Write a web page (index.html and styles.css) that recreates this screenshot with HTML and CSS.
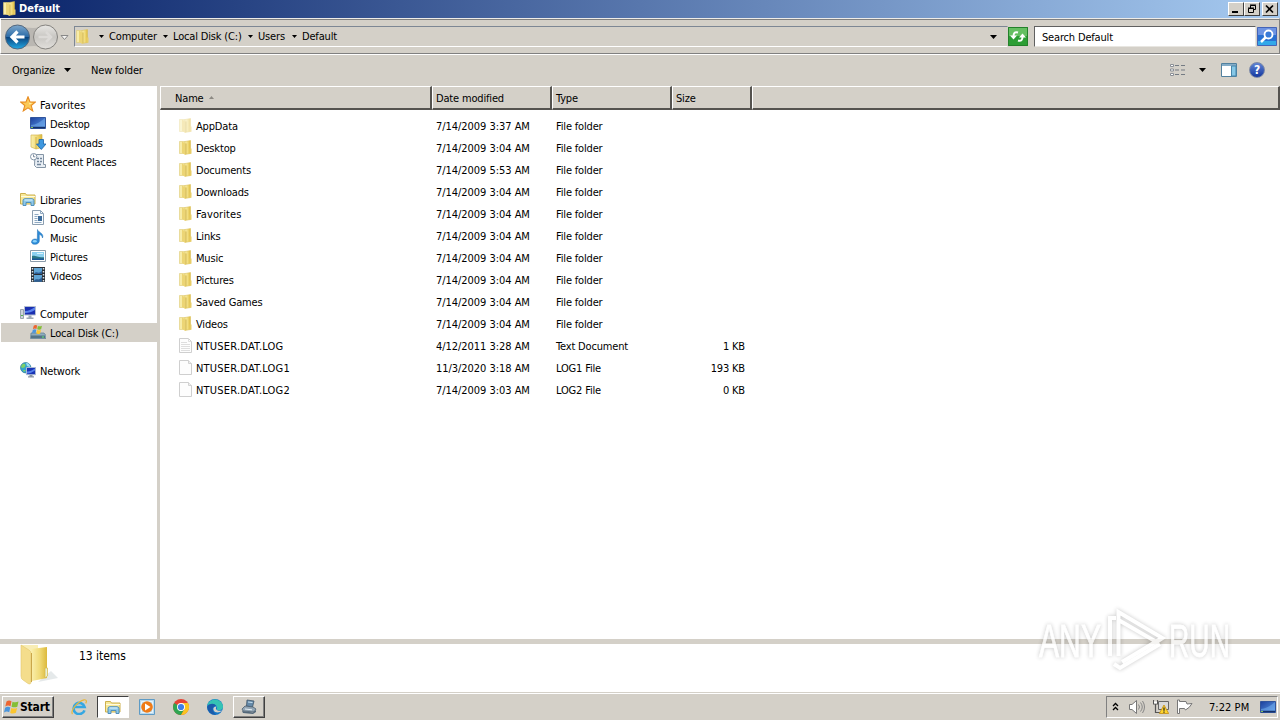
FILE: index.html
```html
<!DOCTYPE html>
<html lang="en">
<head>
    <meta charset="utf-8">
    <title>Default</title>
    <link rel="stylesheet" href="styles.css">
</head>
<body>

    <!-- shared icons -->
    <svg class="sprite">
        <defs>
            <linearGradient id="gold" x1="0" x2="1"><stop offset="0" stop-color="#fbf0ae"/><stop offset=".55" stop-color="#f0da77"/><stop offset="1" stop-color="#dcb93c"/></linearGradient>
            <linearGradient id="blue" x1="0" y1="0" x2="1" y2="1"><stop offset="0" stop-color="#1c3f9c"/><stop offset="1" stop-color="#5b9be8"/></linearGradient>
            <linearGradient id="navBlue" x1="0" y1="0" x2="0" y2="1"><stop offset="0" stop-color="#7fa8cc"/><stop offset=".48" stop-color="#2c6ca8"/><stop offset=".52" stop-color="#0b4580"/><stop offset="1" stop-color="#23a9e4"/></linearGradient>
            <linearGradient id="navGray" x1="0" y1="0" x2="0" y2="1"><stop offset="0" stop-color="#e8e7e4"/><stop offset=".5" stop-color="#c8c6c2"/><stop offset="1" stop-color="#e2e0dc"/></linearGradient>
        </defs>
        <symbol id="folder" viewBox="0 0 16 16">
            <path d="M1.500 1.500h5.500v12H1.500z" fill="#f7eca9" stroke="#dfcb75" stroke-width=".6"/>
            <path d="M7 1.500l5.500-1v13L7 14.500z" fill="url(#gold)" stroke="#d8bc52" stroke-width=".5"/>
            <path d="M4 1.500l3.500 2v11.500L4 13z" fill="#ecd575"/>
            <path d="M8 3.500v10.500" stroke="#c3a33a" stroke-width=".7"/>
            <path d="M11.500 8.500h2v5.200h-2z" fill="#e8cd66"/>
        </symbol>
        <symbol id="page" viewBox="0 0 16 16">
            <path d="M1.500.5h9l3 3v11h-12z" fill="#fdfdfd" stroke="#cfcfcf"/>
            <path d="M10.500.5v3h3" fill="#eee" stroke="#d2d2d2"/>
        </symbol>
        <symbol id="text" viewBox="0 0 16 16">
            <path d="M1.500.5h9l3 3v11h-12z" fill="#fdfdfd" stroke="#cfcfcf"/>
            <path d="M10.500.5v3h3M3 4.500h6M3 6.500h9M3 8.500h9M3 10.500h9M3 12.500h9" fill="none" stroke="#dedede"/>
        </symbol>
        <symbol id="star" viewBox="0 0 16 16">
            <path d="M8 .8l2 5.100 5.400.200-4.200 3.400 1.500 5.400L8 11.800l-4.700 3.100 1.500-5.400L.6 6.100 6 5.900z" fill="#fbc957" stroke="#e88c22" stroke-width="1.100"/>
            <path d="M8 3l1.200 3.700 3.300.3-3 1.500z" fill="#fff0a8"/>
        </symbol>
        <symbol id="desktop" viewBox="0 0 16 16">
            <path d="M.5 2.500h15v11H.5z" fill="url(#blue)" stroke="#31549c"/>
            <path d="M1 10C6 10 10 7 15 3v9H1z" fill="#78b3f2" opacity=".5"/>
            <path d="M1 12.500h14" stroke="#143068" stroke-width="1.500"/><path d="M1 12.500h2" stroke="#82c35c"/>
        </symbol>
        <symbol id="downloads" viewBox="0 0 16 16">
            <path d="M1 1h7l4-.5v13L6 15l-5-2z" fill="url(#gold)" stroke="#d4b650" stroke-width=".7"/><path d="M6 3v12" stroke="#c9a637" stroke-width=".8"/>
            <path d="M9 5.500h4.500V10H16l-4.700 5.500L6.500 10H9z" fill="#3e98e0" stroke="#1963a8" stroke-width=".8"/>
        </symbol>
        <symbol id="recent" viewBox="0 0 16 16">
            <path d="M5 1.500h8.500v10h2v3h-9l-2-2z" fill="#e8eef4" stroke="#8494a5"/>
            <path d="M7 5.500h2M10 5.500h2M7 8.500h2M10 8.500h2M7 11.500h4" stroke="#71859a" stroke-width="1.300"/>
            <circle cx="3.700" cy="3.700" r="3.200" fill="#fff" stroke="#8496a9"/><path d="M3.500 1.500v2.300h1.800" fill="none" stroke="#5d7087" stroke-width=".8"/>
        </symbol>
        <symbol id="libraries" viewBox="0 0 16 16">
            <path d="M.5 13V2.500h5l1 1.500H15v9z" fill="#f7e99a" stroke="#cdb04d"/>
            <path d="M1 5.500h14" stroke="#fffbe0"/>
            <path d="M3 14.500V9.500q0-1.800 2-1.800h7q2 0 2 1.800v5h-3v-3H6v3z" fill="#8fc8e8" stroke="#4689b8" stroke-width=".9"/>
            <path d="M4.500 9h8" stroke="#dff5ff"/>
        </symbol>
        <symbol id="documents" viewBox="0 0 16 16">
            <path d="M2.500.5h8l3 3v11h-11z" fill="#f9fcfe" stroke="#8c9fb1"/>
            <path d="M10.500.5v3h3M4.500 4.500h4M4.500 6.500h3M4.500 8.500h3M4.500 12.500h7M4.500 10.500h3" fill="none" stroke="#8fa9c2"/>
            <path d="M8 6h4v5H8z" fill="#3b6b9c"/>
        </symbol>
        <symbol id="music" viewBox="0 0 16 16">
            <path d="M7.500.5c1 3.500 6.800 3.500 5 8.500-.5-2.500-1.700-3-3.200-3.700V12c0 4-7.800 4.500-7.800 1 0-2.800 3.500-3.700 5.800-2.500z" fill="#2c8bd8" stroke="#1f6eb3" stroke-width=".5"/>
            <ellipse cx="4.800" cy="12.300" rx="2" ry="1.200" fill="#8bd2fa"/>
        </symbol>
        <symbol id="pictures" viewBox="0 0 16 16">
            <path d="M.5 2.500h15v11H.5z" fill="#fff" stroke="#8b9cab"/>
            <path d="M2 4h12v8H2z" fill="#8bd0f0"/><path d="M2 8c3-1 5 1.500 12 1.200V12H2z" fill="#2b7785"/><path d="M2 10.500h12V12H2z" fill="#1a5798"/><path d="M7 5.500h6" stroke="#d7f1fc"/>
        </symbol>
        <symbol id="videos" viewBox="0 0 16 16">
            <path d="M1 0h14v15H1z" fill="#292f36"/><path d="M4 1h8v6H4zM4 8h8v6.500H4z" fill="#5fa4d5"/>
            <path d="M4 7c3-4 4 1 8-3v3zM4 14c3-4 4 1 8-4v4.500H4z" fill="#2c5c92"/>
            <path d="M2.500 1v14M13.500 1v14" stroke="#dfe5ea" stroke-width="1.500" stroke-dasharray="1.500 1.500"/>
        </symbol>
        <symbol id="computer" viewBox="0 0 16 16">
            <path d="M.5 4.500h3v9h-3z" fill="#ced4db" stroke="#9aa4af"/><path d="M1 10.500h2" stroke="#59b551"/>
            <path d="M4.500 1.500h11v8.500h-11z" fill="#1a2fb0" stroke="#b4bed0"/>
            <path d="M5 6c4 0 7-2 10-4v3c-3 2-6 3-10 3z" fill="#5b83ee"/>
            <path d="M8.500 10.500h3v2h2v1.500h-7v-1.500h2z" fill="#9da8b5"/>
        </symbol>
        <symbol id="flag4" viewBox="0 0 16 16">
            <path d="M2.500 2.500Q5 .5 7.500 2.300L6.500 7.300Q4 5.700 1.300 7.500z" fill="#ed6530"/>
            <path d="M8.500 2.800Q11.500 4 14.500 2.500L13.300 7.700Q10.500 9 7.500 7.700z" fill="#84be35"/>
            <path d="M1.100 8.700Q3.800 6.900 6.300 8.500L5.200 13.300Q2.700 11.700 0 13.500z" fill="#4a95dc"/>
            <path d="M7.300 8.900Q10 10.200 13.100 8.900L11.900 13.800Q9 15.300 6.200 13.900z" fill="#fbc52e"/>
        </symbol>
        <symbol id="disk" viewBox="0 0 16 16">
            <path d="M1 9h13l2 2.500v3H.5z" fill="#8eacbd" stroke="#5c7c90" stroke-width=".7"/>
            <path d="M1 11.500h14v2.500H1z" fill="#537487"/><path d="M12 13h2" stroke="#65ea6e"/>
            <use href="#flag4" x="2" y="0" width="11" height="11"/>
        </symbol>
        <symbol id="network" viewBox="0 0 16 16">
            <circle cx="5.700" cy="5.700" r="5.200" fill="#35a4cd" stroke="#2c7893" stroke-width=".7"/>
            <path d="M2 2.500c3-2 4 0 3 2S2 6 1 5zM6 8l-2 2-1-2z" fill="#7fd066"/>
            <path d="M6 1c3 0 4 2 4 4L7 4z" fill="#a4dff2"/>
            <path d="M6.500 5.500h9v7.200h-9z" fill="#1934b5" stroke="#aab8d2"/><path d="M7 9.500c3 0 5-1 8-3v2c-3 2-5 3-8 3z" fill="#5680ec"/>
            <path d="M9.500 13h3v1.300h1.500v1.200H8v-1.200h1.500z" fill="#8b96a3"/>
        </symbol>
        <symbol id="down" viewBox="0 0 7 4"><path d="M0 0h7L3.500 4z" fill="#000"/></symbol>
    </svg>

    <div class="titlebar">
        <svg class="icon"><use href="#folder"/></svg>
        <h1>Default</h1>
        <div class="window-buttons">
            <button><svg viewBox="0 0 12 10"><path d="M2 8h6" stroke="#000" stroke-width="2"/></svg></button>
            <button><svg viewBox="0 0 12 10"><path d="M4.500 4V1.500h5v4H8M4 1h6M2.500 4.500h5v4h-5zM2 4h6" fill="none" stroke="#000"/></svg></button>
            <button class="close"><svg viewBox="0 0 12 10"><path d="M2 1.500l7 7M9 1.500l-7 7" stroke="#000" stroke-width="1.700"/></svg></button>
        </div>
    </div>

    <div class="navbar">
        <svg class="travel" viewBox="0 0 66 28">
            <path d="M14 3q15 4 31 0v22q-15-4-31 0z" fill="#bab7b2"/>
            <circle cx="13.500" cy="14" r="12" fill="url(#navBlue)" stroke="#53677d"/>
            <path d="M20.500 14H9M13.500 8.500L8 14l5.500 5.500" fill="none" stroke="#fff" stroke-width="3.200"/>
            <circle cx="41.500" cy="14" r="12" fill="url(#navGray)" stroke="#85837f"/>
            <path d="M34.500 14H47M42 9l5 5-5 5" fill="none" stroke="#dcdad7" stroke-width="2.500"/>
            <path d="M57 12.500h7L60.500 16.500z" fill="#f4f3f1" stroke="#888"/>
        </svg>
        <div class="address">
            <svg class="icon"><use href="#folder"/></svg>
            <div class="crumbs">
                <svg class="arrow"><use href="#down"/></svg><span class="c-computer">Computer</span>
                <svg class="arrow"><use href="#down"/></svg><span class="c-disk">Local Disk (C:)</span>
                <svg class="arrow"><use href="#down"/></svg><span class="c-users">Users</span>
                <svg class="arrow"><use href="#down"/></svg><span>Default</span>
            </div>
            <svg class="arrow wide"><use href="#down"/></svg>
        </div>
        <svg class="refresh" viewBox="0 0 20 19">
            <path d="M0 0h20v19H0z" fill="#2d9e35"/><path d="M1 1h18v8H1z" fill="#65bf62"/>
            <path d="M.5.5h19v18H.5z" fill="none" stroke="#24812b"/>
            <path d="M10 5.500Q5.500 4 5.500 9.500M10 13.500q4.500 1.500 4.500-4" fill="none" stroke="#fff" stroke-width="2"/>
            <path d="M2 8.500h7l-3.500 4zM11 10.500h7l-3.500-4z" fill="#fff"/>
        </svg>
        <div class="search">Search Default</div>
        <svg class="find" viewBox="0 0 20 19">
            <path d="M.5.5h19v18H.5z" fill="#2870d2" stroke="#4564b7"/><path d="M1 1h18v7H1z" fill="#6d93e2"/><path d="M1 14h18v4H1z" fill="#32a8e9"/>
            <circle cx="11.500" cy="7.500" r="4" fill="#397ad8" stroke="#fff" stroke-width="1.800"/><path d="M8.500 10.500L4 15" stroke="#fff" stroke-width="2.500"/>
        </svg>
    </div>

    <div class="toolbar">
        <span class="organize">Organize</span>
        <svg class="arrow big"><use href="#down"/></svg>
        <span class="new-folder">New folder</span>
        <svg class="views" viewBox="0 0 16 14">
            <path d="M.5 1.500h3v2h-3zM.5 6h3v2h-3zM.5 10.500h3v2h-3z" fill="#fff" stroke="#8a8f96"/>
            <path d="M5 2.500h4M11 2.500h4M5 7h4M11 7h4M5 11.500h4M11 11.500h4" stroke="#747b83"/>
        </svg>
        <svg class="arrow big views-arrow"><use href="#down"/></svg>
        <svg class="preview" viewBox="0 0 16 14">
            <path d="M.5.500h15v13H.5z" fill="#fff" stroke="#51809e"/><path d="M1 2h14" stroke="#5b91b4" stroke-width="1.500"/>
            <path d="M10.500 3h4.500v10h-4.500z" fill="#86c8e7" stroke="#4685aa"/>
        </svg>
        <div class="help">?</div>
    </div>

    <div class="main">
        <div class="sidebar">
            <ul>
                <li class="top"><svg class="icon"><use href="#star"/></svg><span class="favorites">Favorites</span></li>
                <li><svg class="icon"><use href="#desktop"/></svg>Desktop</li>
                <li><svg class="icon"><use href="#downloads"/></svg>Downloads</li>
                <li><svg class="icon"><use href="#recent"/></svg>Recent Places</li>
            </ul>
            <ul>
                <li class="top"><svg class="icon"><use href="#libraries"/></svg>Libraries</li>
                <li><svg class="icon"><use href="#documents"/></svg>Documents</li>
                <li><svg class="icon"><use href="#music"/></svg>Music</li>
                <li><svg class="icon"><use href="#pictures"/></svg>Pictures</li>
                <li><svg class="icon"><use href="#videos"/></svg>Videos</li>
            </ul>
            <ul>
                <li class="top"><svg class="icon"><use href="#computer"/></svg>Computer</li>
                <li class="selected"><svg class="icon"><use href="#disk"/></svg>Local Disk (C:)</li>
            </ul>
            <ul>
                <li class="top"><svg class="icon"><use href="#network"/></svg>Network</li>
            </ul>
        </div>

        <div class="files">
            <div class="columns">
                <div>Name <svg class="sort" viewBox="0 0 5 3"><path d="M0 3h5L2.500 0z" fill="#8c8983"/></svg></div>
                <div>Date modified</div>
                <div>Type</div>
                <div>Size</div>
                <div></div>
            </div>
            <div class="rows">
                <div class="row hidden-file"><svg class="icon"><use href="#folder"/></svg><span>AppData</span><span class="date">7/14/2009 3:37 AM</span><span>File folder</span></div>
                <div class="row"><svg class="icon"><use href="#folder"/></svg><span>Desktop</span><span class="date">7/14/2009 3:04 AM</span><span>File folder</span></div>
                <div class="row"><svg class="icon"><use href="#folder"/></svg><span>Documents</span><span class="date">7/14/2009 5:53 AM</span><span>File folder</span></div>
                <div class="row"><svg class="icon"><use href="#folder"/></svg><span>Downloads</span><span class="date">7/14/2009 3:04 AM</span><span>File folder</span></div>
                <div class="row"><svg class="icon"><use href="#folder"/></svg><span class="favorites">Favorites</span><span class="date">7/14/2009 3:04 AM</span><span>File folder</span></div>
                <div class="row"><svg class="icon"><use href="#folder"/></svg><span>Links</span><span class="date">7/14/2009 3:04 AM</span><span>File folder</span></div>
                <div class="row"><svg class="icon"><use href="#folder"/></svg><span>Music</span><span class="date">7/14/2009 3:04 AM</span><span>File folder</span></div>
                <div class="row"><svg class="icon"><use href="#folder"/></svg><span>Pictures</span><span class="date">7/14/2009 3:04 AM</span><span>File folder</span></div>
                <div class="row"><svg class="icon"><use href="#folder"/></svg><span>Saved Games</span><span class="date">7/14/2009 3:04 AM</span><span>File folder</span></div>
                <div class="row"><svg class="icon"><use href="#folder"/></svg><span>Videos</span><span class="date">7/14/2009 3:04 AM</span><span>File folder</span></div>
                <div class="row"><svg class="icon"><use href="#text"/></svg><span class="caps">NTUSER.DAT.LOG</span><span class="date">4/12/2011 3:28 AM</span><span>Text Document</span><span class="size">1 KB</span></div>
                <div class="row"><svg class="icon"><use href="#page"/></svg><span class="caps">NTUSER.DAT.LOG1</span><span class="date">11/3/2020 3:18 AM</span><span>LOG1 File</span><span class="size">193 KB</span></div>
                <div class="row"><svg class="icon"><use href="#page"/></svg><span class="caps">NTUSER.DAT.LOG2</span><span class="date">7/14/2009 3:03 AM</span><span>LOG2 File</span><span class="size">0 KB</span></div>
            </div>
        </div>
    </div>

    <div class="details">
        <svg class="big-folder" viewBox="0 0 40 42">
            <path d="M18 38l20-4-7-7z" fill="#a9b7b9" opacity=".3"/>
            <path d="M1 1h17v33H5L1 31z" fill="#f8edb5"/>
            <path d="M11 5l16-2v31l-15 3z" fill="url(#gold)"/>
            <path d="M1 1l8 5q2 1 2 4v28q0 3-3 1.500l-5-3.500q-2-1-2-4z" fill="#f4dd8c" stroke="#e2c86d" stroke-width=".6"/>
            <path d="M11.500 9v29" stroke="#caa64a" stroke-width="1"/>
            <path d="M25 24h2.500v8l-2.500 2z" fill="#e8f0d6" stroke="#d7bd52" stroke-width=".8"/>
        </svg>
        <span>13 items</span>
    </div>

    <div class="taskbar">
        <div class="start"><svg class="icon"><use href="#flag4"/></svg><span>Start</span></div>
        <div class="task">
            <svg class="icon" viewBox="0 0 16 16">
                <path d="M13.500 11.300A5.600 5.600 0 1 1 13.600 8H4" fill="none" stroke="#35a7e2" stroke-width="2.600"/>
                <path d="M1.500 15C-1 12 7 2 13 .8c3-.5 2.700 2 1.700 3.600" fill="none" stroke="#e8b73b" stroke-width="1.200"/>
            </svg>
        </div>
        <div class="task active"><svg class="icon"><use href="#libraries"/></svg></div>
        <div class="task">
            <svg class="icon" viewBox="0 0 16 16">
                <path d="M.5.500h15v15H.5z" fill="#b9d9ee" stroke="#5e9bc5"/><path d="M2.500 2.500h11v11h-11z" fill="none" stroke="#e7f5fc"/>
                <circle cx="8" cy="8" r="5.800" fill="#ef7b17"/><path d="M6 4.500L11.500 8 6 11.500z" fill="#fff"/>
            </svg>
        </div>
        <div class="task">
            <svg class="icon" viewBox="0 0 16 16">
                <circle cx="8" cy="8" r="8" fill="#e54335"/><path d="M8 8L1.100 4A8 8 0 0 0 8 16l3.500-6z" fill="#2fa552"/><path d="M8 16a8 8 0 0 0 7-12H8l3.500 6z" fill="#fbc421"/>
                <circle cx="8" cy="8" r="4" fill="#fff"/><circle cx="8" cy="8" r="3.100" fill="#3e7ee8"/>
            </svg>
        </div>
        <div class="task">
            <svg class="icon" viewBox="0 0 16 16">
                <circle cx="8" cy="8" r="8" fill="#1577c8"/><path d="M.2 6.500C2-1.500 14-2 16 7c.5 4-4 5-6.500 3.500C12 7 7 3.500.2 6.500z" fill="#35c3b4"/>
                <path d="M9.500 7.500c-2 3 1 5 5.500 4-2 2.500-7 3-8.500-.5-.7-2 .7-3.500 3-3.500z" fill="#d4d0c8"/><path d="M.2 8C2 4 8 4 9 7c-4-.5-5 5 0 8.800A8 8 0 0 1 .2 8z" fill="#1c5ba9"/>
            </svg>
        </div>
        <div class="task raised">
            <svg class="icon" viewBox="0 0 16 16">
                <path d="M6 1l7 1-1.500 6-6-1z" fill="#658aa9" stroke="#3e566b" stroke-width=".8"/><path d="M7 3l4.500.500" stroke="#c8e0f0"/>
                <path d="M4 7l8 1 3 2-2 3-11-1-1-2z" fill="#93a6b5" stroke="#4c6071" stroke-width=".8"/><path d="M1 12l11 1.500L15 11v2l-3 2-10-1z" fill="#526779"/>
                <path d="M4 10l7 .8" stroke="#e6eef4"/>
            </svg>
        </div>
        <div class="tray">
            <svg class="chevrons" viewBox="0 0 7 9"><path d="M1 4l2.500-2.500L6 4M1 8l2.500-2.500L6 8" fill="none" stroke="#000" stroke-width="1.300"/></svg>
            <svg class="icon speaker" viewBox="0 0 16 16">
                <path d="M.5 5.500H3L7.500 1.500v13L3 10.500H.5z" fill="#fff" stroke="#777"/>
                <path d="M9.500 5.500q2 2.500 0 5M11.500 3.500q3.500 4.500 0 9M13.500 2q4 6 0 12" fill="none" stroke="#868686"/>
            </svg>
            <svg class="icon net" viewBox="0 0 16 16">
                <path d="M5.500 2.500h10v8h-10z" fill="#d9d9d9" stroke="#666"/><path d="M.5 1v4h4V1M2.500 5v8.500H8" fill="none" stroke="#555" stroke-width="1.200"/><path d="M1 2.500h3v2H1z" fill="#fff"/>
                <path d="M11 6l4.700 8.500H6.300z" fill="#ffd52d" stroke="#c38b12" stroke-width=".8"/><path d="M11 8.500v3.300M11 12.600v1.200" stroke="#222" stroke-width="1.200"/>
            </svg>
            <svg class="icon flag" viewBox="0 0 16 16"><path d="M.5 1v13.500h2V9.500h5l1 1.500q4.500-2.500 6.500-6.500l-5 .5-1-2.500h-6.500V1z" fill="#fff" stroke="#777"/></svg>
            <span class="clock">7:22 PM</span>
            <svg class="icon"><use href="#desktop"/></svg>
        </div>
    </div>

    <svg class="watermark" viewBox="0 0 220 80">
        <text x="9" y="57" textLength="62" lengthAdjust="spacingAndGlyphs">ANY</text>
        <path d="M80 56V18h6M88.500 56V12l44 26-6 4-38-22M92 62l40-24M84 64l6 4 40-24" />
        <text x="139" y="57" textLength="61" lengthAdjust="spacingAndGlyphs">RUN</text>
    </svg>

</body>
</html>
```
FILE: styles.css
```css
* { box-sizing: border-box; }
html, body { height: 100%; }
body { margin: 0; display: flex; flex-direction: column; overflow: hidden; background: #d4d0c8; color: #000; font: 11px/19px "DejaVu Sans Condensed", "DejaVu Sans", sans-serif; font-stretch: condensed; letter-spacing: -0.17px; white-space: nowrap; }
ul { list-style: none; margin: 0 0 19px; padding: 0; }
svg { display: block; flex: none; }
.sprite { position: absolute; width: 0; height: 0; }
.icon { width: 16px; height: 16px; }
.arrow { width: 5px; height: 3px; }
.arrow.big { width: 7px; height: 4px; }
.arrow.wide { width: 7px; height: 4px; margin-left: auto; margin-right: 10px; }

.titlebar { flex: none; height: 18px; display: flex; align-items: center; padding: 0 2px; background: linear-gradient(to right, #0a246a, #a6caf0); }
.titlebar h1 { margin: 0 0 0 1px; color: #fff; font-size: 11px; line-height: 18px; letter-spacing: 0; }
.window-buttons { display: flex; margin-left: auto; }
.window-buttons button { width: 16px; height: 14px; padding: 1px; background: #d4d0c8; border: 1px solid; border-color: #fff #404040 #404040 #fff; }
.window-buttons .close { margin-left: 2px; }
.window-buttons svg { width: 12px; height: 10px; }

.navbar { flex: none; height: 36px; display: flex; align-items: center; padding: 1px 2px 0 3px; border: 1px solid #808080; border-color: #eeece8 #808080 #808080 #fff; box-shadow: 0 1px #fff, inset 0 1px #808080; }
.travel { width: 66px; height: 28px; }
.address { width: 934px; height: 21px; margin-left: 4px; display: flex; align-items: center; border: 1px solid; border-color: #7d8794 #d4d0c8 #fff #7d8794; }
.refresh { width: 20px; height: 19px; }
.crumbs { display: flex; align-items: center; margin-left: 8px; }
.crumbs span { margin: 0 0 0 5px; }
.crumbs span + .arrow { margin-left: 5px; }
.crumbs .c-computer { width: 49px; }
.crumbs .c-disk { width: 70px; }
.crumbs .c-users { width: 29px; }
.search { width: 222px; height: 21px; margin-left: 6px; padding: 1px 0 0 7px; background: #fff; border: 1px solid; border-color: #606060 #e8e6e1 #e8e6e1 #606060; }
.find { width: 20px; height: 19px; margin-left: 1px; }

.toolbar { flex: none; height: 32px; display: flex; align-items: center; padding: 0 15px 0 12px; }
.organize { width: 52px; }
.new-folder { margin-left: 20px; }
.views { width: 16px; height: 14px; margin-left: auto; }
.views-arrow { margin-left: 13px; }
.preview { width: 16px; height: 14px; margin: 0 12px 0 15px; }
.help { width: 16px; height: 16px; border-radius: 50%; background: linear-gradient(#5f83d4, #15389f); border: 1px solid #7c89a7; color: #fff; font-size: 12px; font-weight: bold; line-height: 14px; text-align: center; }

.main { flex: none; height: 553px; display: flex; }
.sidebar { width: 160px; padding-top: 9px; background: #fff; border-right: 3px solid #d4d0c8; }
.sidebar li { height: 19px; display: flex; align-items: center; padding-left: 30px; line-height: 17px; padding-top: 1px; }
.sidebar li .icon { margin: -2px 4px 0 0; }
.sidebar .top { padding-left: 20px; }
.sidebar .selected { margin-left: 1px; padding-left: 29px; background: #d4d0c8; }
.favorites { letter-spacing: 0.1px; }

.files { flex: 1; background: #fff; }
.columns { height: 23px; display: grid; grid-template-columns: 272px 120px 120px 80px 1fr; background: #d4d0c8; }
.columns div { display: flex; align-items: center; padding: 2px 3px 0; border: solid; border-width: 1px 2px 2px 1px; border-color: #fff #55534f #55534f #fff; }
.columns div:first-child { padding-left: 14px; }
.sort { width: 5px; height: 3px; margin-left: 5px; margin-bottom: 2px; }
.rows { padding-top: 6px; }
.row { height: 22px; display: grid; grid-template-columns: 18px 240px 120px 120px 69px; align-items: center; padding-left: 18px; }
.row .date { letter-spacing: -0.04px; }
.row .caps { letter-spacing: 0.2px; }
.row .size { text-align: right; }
.hidden-file .icon { opacity: .5; }

.details { flex: none; height: 54px; display: flex; background: #fff; border-top: 5px solid #d4d0c8; border-bottom: 1px solid #d4d0c8; font-size: 12px; line-height: 24px; letter-spacing: -0.05px; }
.big-folder { width: 40px; height: 42px; margin: 0 19px 0 20px; }

.taskbar { flex: none; height: 27px; display: flex; align-items: center; padding: 0 2px; background: #d4d0c8; box-shadow: inset 0 1px #fff; }
.start { width: 52px; height: 22px; display: flex; align-items: center; padding-left: 1px; border: 1px solid; border-color: #fff #404040 #404040 #fff; box-shadow: inset -1px -1px #808080; font-size: 12px; font-weight: bold; }
.start span { padding-top: 1px; }
.start + .task { margin-left: 9px; }
.task { width: 32px; height: 22px; margin-right: 2px; display: flex; align-items: center; justify-content: center; border: 1px solid transparent; }
.task.active { background: #fff; border-color: #404040 #fff #fff #404040; }
.task.raised { border-color: #fff #404040 #404040 #fff; box-shadow: inset -1px -1px #808080; }
.tray { width: 172px; height: 22px; margin-left: auto; display: flex; align-items: center; padding-left: 5px; border: 1px solid; border-color: #808080 #fff #fff #808080; }
.chevrons { width: 7px; height: 9px; }
.speaker { margin-left: 10px; }
.net { margin-left: 8px; }
.flag { margin-left: 8px; }
.clock { width: 51px; margin-left: 16px; padding-top: 1px; letter-spacing: 0.05px; }

.watermark { position: absolute; left: 1030px; top: 600px; width: 220px; height: 80px; filter: drop-shadow(0 0 2px rgba(0, 0, 0, .3)); opacity: .75; }
.watermark text { font: 46px "Liberation Sans Narrow", "Liberation Sans", sans-serif; letter-spacing: 0; fill: #fff; stroke: #fff; stroke-width: .8; }
.watermark path { fill: none; stroke: #fff; stroke-width: 4; }
```
